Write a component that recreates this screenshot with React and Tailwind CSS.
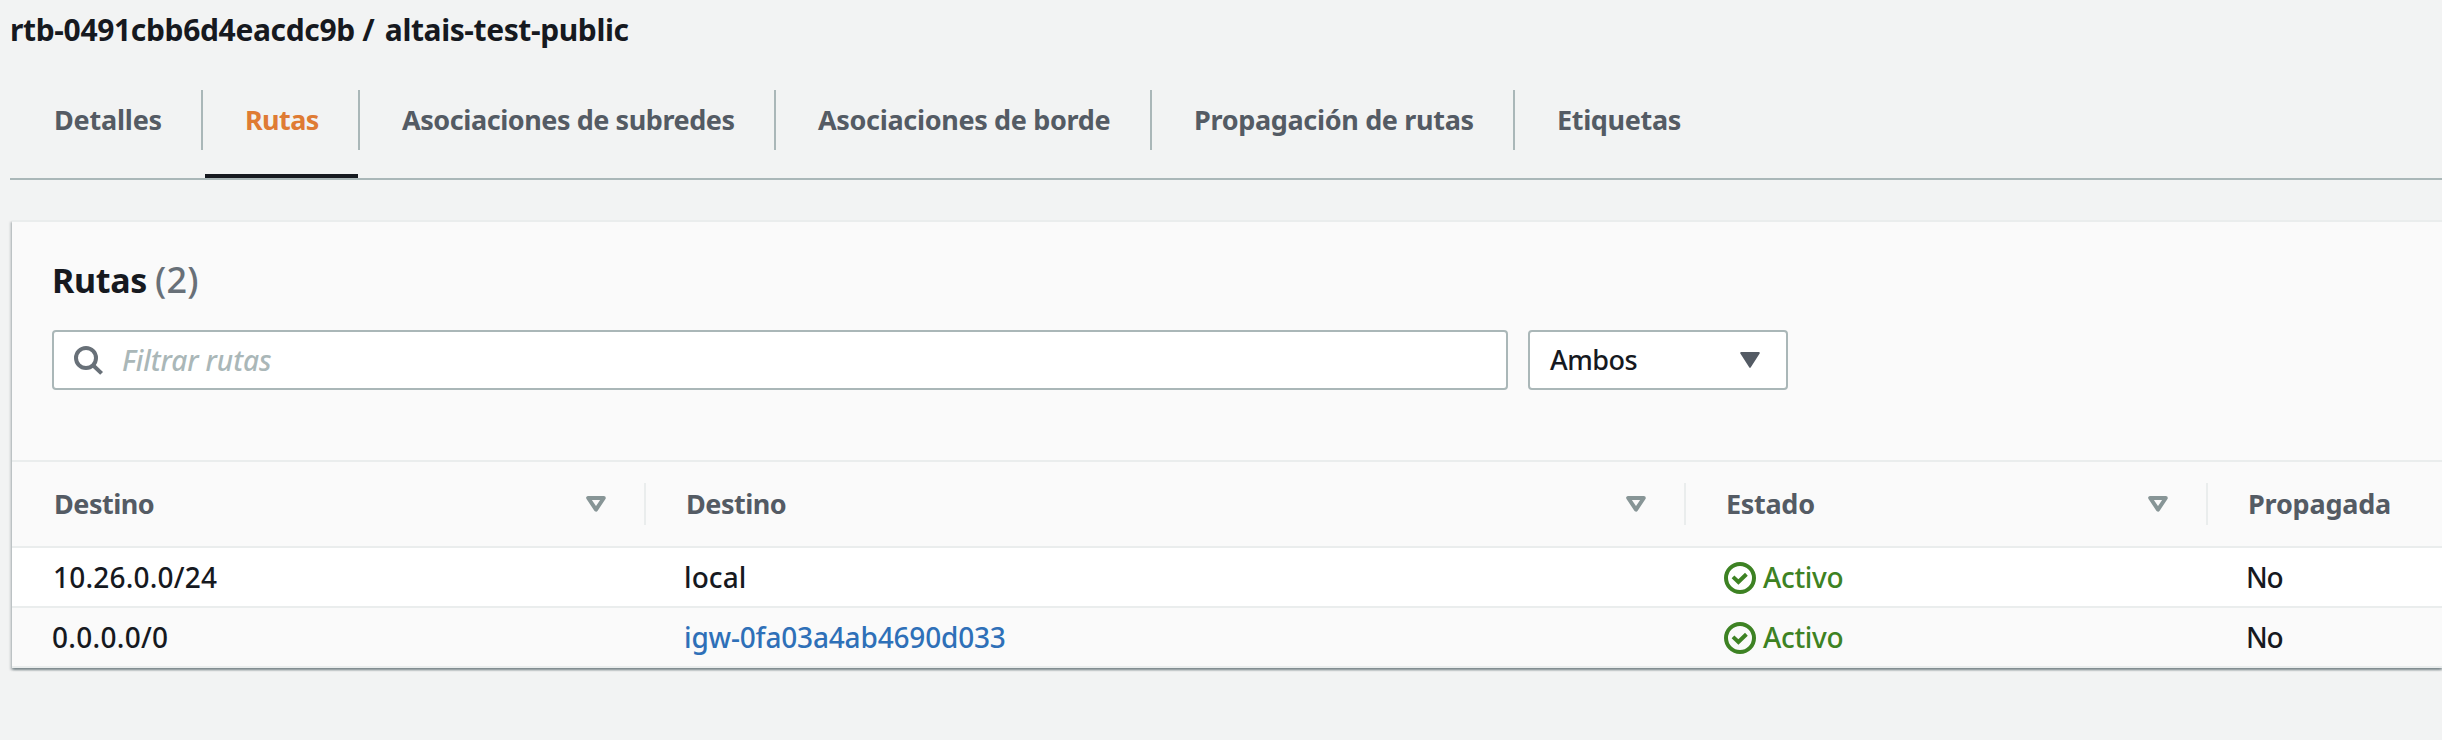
const tabs = [
  { label: "Detalles", box: "w-[193px] pl-[44px] tracking-[-0.2px]" },
  { label: "Rutas", box: "w-[157px] pl-[42px] tracking-[-0.6px]", active: true },
  { label: "Asociaciones de subredes", box: "w-[416px] pl-[42px] tracking-[-0.44px]" },
  { label: "Asociaciones de borde", box: "w-[376px] pl-[42px] tracking-[-0.33px]" },
  { label: "Propagación de rutas", box: "w-[363px] pl-[42px] tracking-[-0.33px]" },
  { label: "Etiquetas", box: "w-[300px] pl-[42px] tracking-[-0.35px]", last: true },
];

const columns = [
  { label: "Destino", pad: "pl-[42px] tracking-[-0.5px]", sortable: true },
  { label: "Destino", pad: "pl-[40px] tracking-[-0.5px]", sortable: true },
  { label: "Estado", pad: "pl-[40px] tracking-[-0.3px]", sortable: true },
  { label: "Propagada", pad: "pl-[40px] tracking-[-0.2px]", sortable: false },
];

const routes = [
  { destination: "10.26.0.0/24", target: "local", status: "Activo", propagated: "No" },
  { destination: "0.0.0.0/0", target: "igw-0fa03a4ab4690d033", link: true, status: "Activo", propagated: "No" },
];

const grid = "grid grid-cols-[634px_1040px_522px_1fr]";

function SearchIcon() {
  return (
    <svg className="h-8 w-8 shrink-0" viewBox="0 0 32 32" fill="none" stroke="#687078" strokeWidth="4">
      <circle cx="14" cy="14" r="10" />
      <path d="M21 21.2 29.6 29.4" />
    </svg>
  );
}

function SortIcon() {
  return (
    <svg className="h-4 w-5 shrink-0" viewBox="0 0 20 16" fill="none" stroke="#879596" strokeWidth="4" strokeLinejoin="round">
      <path d="M2.2 2h15.6L10 13.6z" />
    </svg>
  );
}

function CaretIcon() {
  return (
    <svg className="h-4 w-5 shrink-0" viewBox="0 0 20 16" fill="#545b64" stroke="#545b64" strokeWidth="2" strokeLinejoin="round">
      <path d="M1.2 1h17.6L10 14.8z" />
    </svg>
  );
}

function StatusIcon() {
  return (
    <svg className="mt-[2px] h-8 w-8 shrink-0" viewBox="0 0 32 32" fill="none" stroke="#3d8223" strokeWidth="4">
      <circle cx="16" cy="16" r="14" />
      <path d="m9 14.9 5.4 5 8-7.6" />
    </svg>
  );
}

export default function App() {
  return (
    <div className="h-[740px] w-full overflow-hidden bg-[#f2f3f3] font-['Noto_Sans',sans-serif] text-[28px] font-medium text-[#16191f]">
      <h1 className="h-[60px] pl-[10px] text-[30px] leading-[60px] font-bold tracking-[-0.35px] whitespace-nowrap">
        rtb-0491cbb6d4eacdc9b /<span className="ml-[3px] tracking-[-0.4px]"> altais-test-public</span>
      </h1>

      <nav className="ml-[10px] flex h-[120px] border-b-2 border-[#aab7b8] text-[27px] font-bold text-[#545b64]">
        {tabs.map((tab) => (
          <div key={tab.label} className="flex flex-col justify-between pt-[30px]">
            <div
              className={`h-[60px] leading-[60px] whitespace-nowrap ${tab.box} ${tab.last ? "" : "border-r-2 border-[#aab7b8]"} ${tab.active ? "text-[#df7b34]" : ""}`}
            >
              {tab.label}
            </div>
            {tab.active && <div className="mr-[2px] ml-[2px] h-1 bg-[#16191f]" />}
          </div>
        ))}
      </nav>

      <section className="mt-10 ml-3 h-[448px] border-t-2 border-[#eaeded] bg-[#fafafa] shadow-[0_2px_2px_0_rgba(0,28,36,0.3),2px_2px_2px_0_rgba(0,28,36,0.15),-2px_2px_2px_0_rgba(0,28,36,0.15)]">
        <div className="flex h-[238px] flex-col pt-[36px] pl-10">
          <h2 className="flex h-[44px] items-baseline text-[34px] leading-[44px] font-bold tracking-[-0.3px]">
            Rutas
            <span className="ml-[8px] text-[36px] font-medium tracking-[0.1px] text-[#687078]">(2)</span>
          </h2>
          <div className="mt-[28px] flex gap-5">
            <div className="flex h-[60px] w-[1456px] items-center rounded-[4px] border-2 border-[#aab7b8] bg-white pl-[18px]">
              <SearchIcon />
              <span className="ml-[18px] leading-[56px] tracking-[-0.1px] text-[#aab7b8] italic">Filtrar rutas</span>
            </div>
            <div className="flex h-[60px] w-[260px] items-center justify-between rounded-[4px] border-2 border-[#aab7b8] bg-white pr-[26px] pl-5">
              <span className="text-[27px] leading-[56px] tracking-[-0.5px]">Ambos</span>
              <CaretIcon />
            </div>
          </div>
        </div>

        <div className={`${grid} h-[88px] items-center border-y-2 border-[#eaeded] text-[27px] font-bold text-[#545b64]`}>
          {columns.map((col, i) => (
            <div
              key={i}
              className={`flex h-[42px] items-center justify-between ${col.pad} ${col.sortable ? "border-r-2 border-[#eaeded] pr-[38px]" : ""}`}
            >
              <span>{col.label}</span>
              {col.sortable && <SortIcon />}
            </div>
          ))}
        </div>

        {routes.map((route) => (
          <div
            key={route.destination}
            className={`${grid} h-[60px] border-b-2 border-[#eaeded] leading-[58px] ${route.link ? "bg-[#fafafa]" : "bg-white"}`}
          >
            <div className={route.link ? "pl-[40px] tracking-[0.3px]" : "pl-[41px] tracking-[0.2px]"}>{route.destination}</div>
            {route.link ? (
              <div className="pl-[38px] tracking-[-0.18px]">
                <a className="text-[#2e70b8]">{route.target}</a>
              </div>
            ) : (
              <div className="pl-[38px] tracking-[0.1px]">{route.target}</div>
            )}
            <div className="flex items-center gap-[7px] pl-[38px] tracking-[-0.35px] text-[#3d8223]">
              <StatusIcon />
              <span>{route.status}</span>
            </div>
            <div className="pl-[38px] tracking-[-1.2px]">{route.propagated}</div>
          </div>
        ))}
      </section>
    </div>
  );
}
